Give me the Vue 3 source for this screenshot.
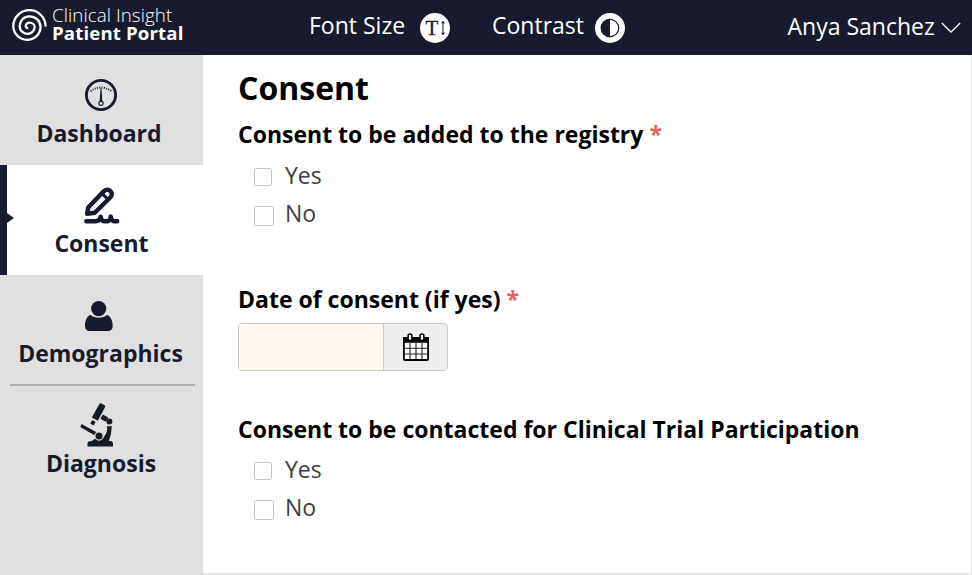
<script setup>
const consentOptions = ['Yes', 'No']
</script>

<template>
  <div class="app">
    <header class="topbar">
      <div class="brand">
        <svg class="brand-mark" viewBox="0 0 38 36" fill="none" stroke="#fff" stroke-width="2.3">
          <path d="M35.6 19.5A16.1 16.3 0 0 0 19.5 3.2A16.2 15.8 0 0 0 3.3 19A13.7 13.8 0 0 0 17 32.8A13.5 12.8 0 0 0 30.5 20A11.2 10.7 0 0 0 19.3 9.3A9.6 10.1 0 0 0 9.7 19.4A7.8 7.4 0 0 0 17.5 26.8A7.1 6.8 0 0 0 24.6 20A5.1 4.4 0 0 0 19.5 15.6A3.7 3.7 0 0 0 15.8 19.3Q16 21 18.2 21" />
        </svg>
        <div class="brand-text">
          <span class="brand-light">Clinical Insight</span>
          <span class="brand-bold">Patient Portal</span>
        </div>
      </div>
      <button class="tool font-tool">
        <span>Font Size</span>
        <svg width="30" height="30" viewBox="0 0 30 30">
          <circle cx="15" cy="15" r="15" fill="#fff" />
          <text class="t-glyph" x="5.4" y="22">T</text>
          <path d="M23 9.5V20.5" stroke="#171b2d" stroke-width="1" />
          <path d="M21 10.2L23 7.8L25 10.2ZM21 19.8L23 22.2L25 19.8Z" fill="#171b2d" />
        </svg>
      </button>
      <button class="tool contrast-tool">
        <span>Contrast</span>
        <svg width="30" height="30" viewBox="0 0 30 30">
          <circle cx="15" cy="15" r="15" fill="#fff" />
          <circle cx="15" cy="15" r="8.7" fill="#fff" stroke="#171b2d" stroke-width="1.2" />
          <path d="M15 5.7A9.3 9.3 0 0 0 15 24.3Z" fill="#171b2d" />
        </svg>
      </button>
      <button class="tool user-menu">
        <span>Anya Sanchez</span>
        <svg width="20" height="12" viewBox="0 0 20 12" fill="none" stroke="#fff" stroke-width="1.3">
          <path d="M.8 1L10 10L19.2 1" />
        </svg>
      </button>
    </header>

    <div class="body">
      <nav class="sidebar">
        <a class="item dashboard">
          <svg width="34" height="34" viewBox="0 0 34 34" fill="none" stroke="#171b2d">
            <circle cx="17" cy="17" r="14.6" stroke-width="2.9" />
            <path d="M6.6 13.2Q17 5.6 27.4 13.2" stroke-width="2" stroke-dasharray="1 1.35" />
            <path d="M16.5 10H17.5L18.3 23H15.7Z" fill="#171b2d" stroke="none" />
            <circle cx="17" cy="25.2" r="2.1" fill="#e0e0e0" stroke-width="1.2" />
          </svg>
          <span>Dashboard</span>
        </a>
        <a class="item consent active">
          <svg width="36" height="38" viewBox="0 0 36 38" fill="none" stroke="#171b2d" stroke-linecap="round" stroke-linejoin="round">
            <path d="M3.1 26.8L4.2 20.5L19.7 4.4C21.8 2.2 24.6 2.2 26.4 4C28.4 6 28.2 8.5 26.2 10.5L10.8 25.8Z" stroke-width="4.4" />
            <path d="M18.2 6.6L24 12.4" stroke-width="3.2" />
            <path d="M2.3 34.2H11.5Q16 34.2 16.6 29.6Q17.5 34.2 20 34.2H23.5Q25.8 34.2 26.7 29.6Q28 34.2 30 34.2H33.3" stroke-width="4.4" />
          </svg>
          <span>Consent</span>
        </a>
        <a class="item demographics">
          <svg width="28" height="30" viewBox="0 0 28 30" fill="#171b2d">
            <circle cx="13.7" cy="7.6" r="7.6" />
            <path d="M5.6 14C1.8 14.8 0 20 0 25C0 28.3 1.8 30 4.8 30H22.8C25.9 30 27.7 28.3 27.7 25C27.7 20 25.7 14.8 21.9 14C19.8 15.7 17 16.7 13.8 16.7S7.7 15.7 5.6 14Z" />
          </svg>
          <span>Demographics</span>
        </a>
        <a class="item diagnosis">
          <svg width="34" height="44" viewBox="0 0 34 44" fill="#141b22">
            <path d="M19.7 .5L21 .2L25 2.5L25.2 3.7L17.8 17.8L11.8 14.4Z" />
            <path d="M12.2 17L15.7 19L13.5 22.5L10.2 20.5Z" />
            <path d="M22.9 11.5L28.2 14.6L25.7 18.8L20.4 15.7Z" />
            <circle cx="29.4" cy="18.6" r="3" />
            <path d="M1.6 21L17 29.5L15.3 32.8L.2 24.1Z" />
            <path d="M27 23Q29 23.8 31.8 22.7L31 31L28.8 38H31.2Q33 38.4 33 41V43.5H7.5V40.5Q7.5 38.2 10 38.2H11.3L16 35Q23 37 24.8 32.5Q27.8 29 27 23Z" />
            <circle cx="19" cy="33" r="4.1" stroke="#e0e0e0" stroke-width="1.2" />
          </svg>
          <span>Diagnosis</span>
        </a>
      </nav>

      <main class="content">
        <h1>Consent</h1>
        <section class="registry">
          <h2>Consent to be added to the registry <b class="req">*</b></h2>
          <label v-for="option in consentOptions" :key="option" class="option" :class="option.toLowerCase()">
            <input type="checkbox"><span>{{ option }}</span>
          </label>
        </section>
        <section class="date">
          <h2>Date of consent (if yes) <b class="req">*</b></h2>
          <div class="date-field">
            <input type="text">
            <button>
              <svg width="26" height="28" viewBox="0 0 26 28">
                <rect x=".9" y="5" width="24.2" height="22" rx="1" fill="#fff" stroke="#000" stroke-width="1.8" />
                <path d="M0 9.7V5Q0 4 1 4H25Q26 4 26 5V9.7Z" />
                <path d="M7 10V26M13 10V26M19 10V26M1 15.2H25M1 21H25" stroke="#222" stroke-width="1.1" />
                <rect x="5.1" y="1" width="3.8" height="6.6" rx="1.9" fill="#fff" stroke="#000" stroke-width="1.5" />
                <rect x="17.1" y="1" width="3.8" height="6.6" rx="1.9" fill="#fff" stroke="#000" stroke-width="1.5" />
              </svg>
            </button>
          </div>
        </section>
        <section class="trial">
          <h2>Consent to be contacted for Clinical Trial Participation</h2>
          <label v-for="option in consentOptions" :key="option" class="option" :class="option.toLowerCase()">
            <input type="checkbox"><span>{{ option }}</span>
          </label>
        </section>
      </main>
    </div>
  </div>
</template>

<style>
body { background: #fff; }
</style>

<style scoped>
* { box-sizing: border-box; }
.app {
  width: 972px;
  height: 575px;
  overflow: hidden;
  display: flex;
  flex-direction: column;
  font-family: "Open Sans", "Noto Sans", sans-serif;
}
button {
  font: inherit;
  border: 0;
  padding: 0;
  background: none;
}
.topbar {
  height: 55px;
  flex: none;
  display: flex;
  background: #171b2d;
  color: #fff;
}
.brand { display: flex; width: 309px; padding: 6px 0 0 10px; }
.brand-mark { width: 38px; height: 36px; flex: none; margin-top: 1px; }
.brand-text { display: flex; flex-direction: column; padding-left: 4px; white-space: nowrap; }
.brand-light { font-size: 18.8px; line-height: 18px; font-weight: 300; letter-spacing: .05px; }
.brand-bold { font-size: 18.6px; line-height: 18px; font-weight: 700; letter-spacing: .15px; }
.tool {
  display: flex;
  align-items: flex-start;
  color: #fff;
  font-size: 23px;
  line-height: 32px;
  padding-top: 9px;
  white-space: nowrap;
}
.tool svg { flex: none; margin-top: 4px; }
.tool span { flex: none; }
.font-tool { width: 183px; }
.font-tool span { width: 111px; text-align: left; }
.contrast-tool { width: 295px; }
.contrast-tool span { width: 103px; text-align: left; }
.user-menu { padding-top: 10px; }
.user-menu span { width: 154px; padding-left: .5px; text-align: left; }
.user-menu svg { margin-top: 12px; }
.t-glyph { font: 21px "Liberation Serif", serif; fill: #171b2d; stroke: #171b2d; stroke-width: .3px; }
.body { display: flex; flex: 1; min-height: 0; }
.sidebar { width: 203px; flex: none; background: #e0e0e0; }
.item {
  position: relative;
  display: flex;
  flex-direction: column;
  align-items: center;
  justify-content: flex-end;
  height: 110px;
  padding-bottom: 16px;
  color: #171b2d;
  font-size: 23px;
  line-height: 32px;
  font-weight: 700;
}
.item svg { flex: none; }
.dashboard svg { margin: 0 1px 5px 0; }
.dashboard span { margin-right: 5px; }
.active { background: #fff; border-left: 7px solid #171b2d; padding-right: 7px; }
.active::before {
  content: "";
  position: absolute;
  left: 0;
  top: 48px;
  border-left: 7px solid #171b2d;
  border-top: 5.5px solid transparent;
  border-bottom: 5.5px solid transparent;
}
.consent svg { margin: 0 0 2px 1px; }
.demographics svg { margin: 0 6px 6px 0; }
.demographics span { margin-right: 2px; }
.demographics::after {
  content: "";
  position: absolute;
  left: 10px;
  right: 8px;
  bottom: -1px;
  height: 2px;
  background: #b0b0b0;
}
.diagnosis svg { margin: 0 9px 0 0; }
.diagnosis span { margin-right: 1px; }
.content {
  flex: 1;
  padding: 11px 0 0 35px;
  border-right: 1px solid #e4e4e4;
  border-bottom: 2px solid #e6e6e6;
  color: #000;
}
h1 { margin: 0; font-size: 32px; line-height: 44px; font-weight: 700; }
h2 { margin: 0; font-size: 23px; line-height: 32px; font-weight: 700; white-space: nowrap; }
.req { color: #f05b5b; font-weight: 700; }
section { padding-top: 8px; }
.registry { height: 165px; }
.date { height: 130px; }
.option {
  display: flex;
  align-items: center;
  height: 38px;
  margin-left: 16px;
  font-size: 23px;
  line-height: 32px;
  color: #3b3e42;
}
h2 + .option { margin-top: 6px; }
.trial h2 + .option { margin-top: 5px; }
.option input {
  appearance: none;
  flex: none;
  width: 18px;
  height: 18px;
  margin: 3px 13px 0 0;
  border: 1px solid #c6c6c6;
  border-radius: 2px;
  background: #fff;
}
.option.no input { width: 20px; height: 20px; margin: 5px 11px 0 0; }
.date-field {
  display: flex;
  width: 210px;
  height: 48px;
  margin-top: 8px;
  border: 1px solid #c9c9c9;
  border-radius: 4px;
  overflow: hidden;
}
.date-field input { width: 144px; border: 0; padding: 0; background: #fff9f2; }
.date-field button {
  flex: 1;
  display: flex;
  align-items: center;
  justify-content: center;
  border-left: 1px solid #c9c9c9;
  background: #ebedef;
}
</style>
